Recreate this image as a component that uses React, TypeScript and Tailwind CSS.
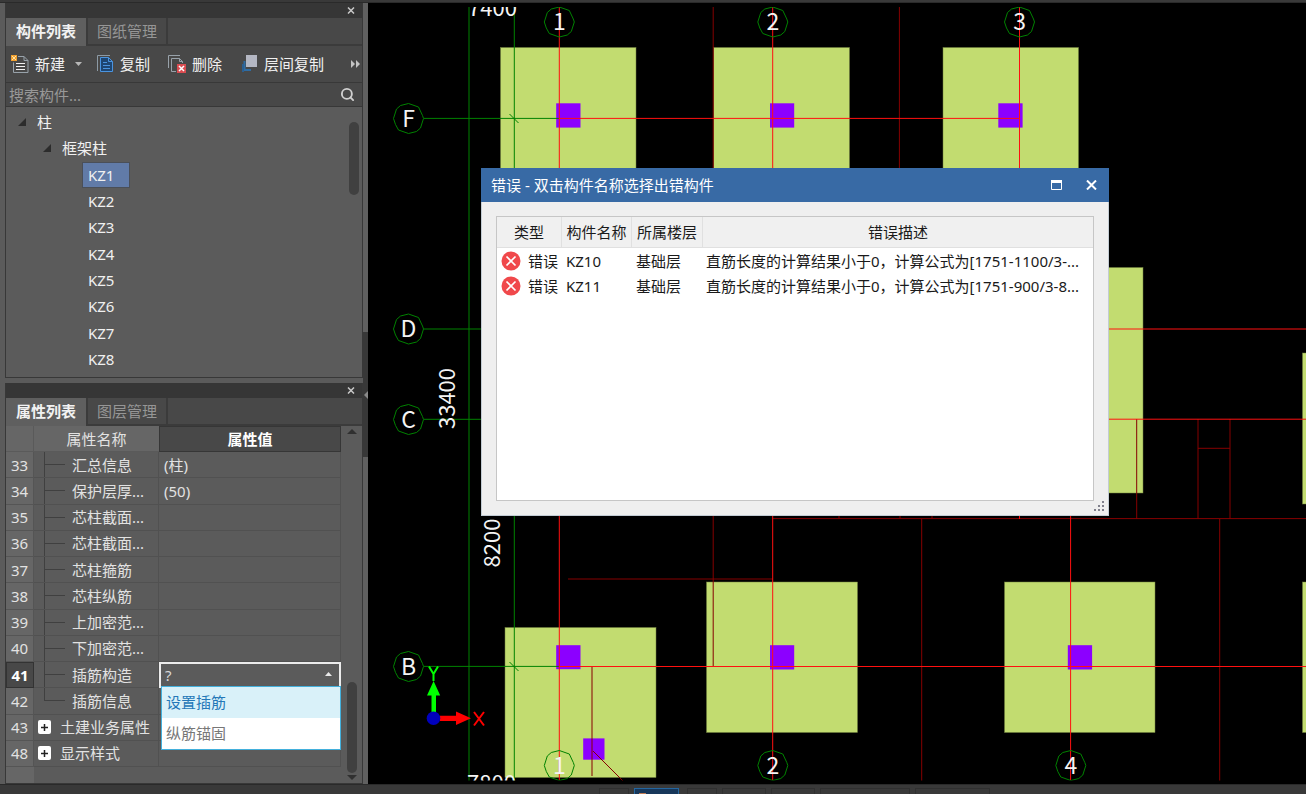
import { Search } from "lucide-react";
import type { ReactNode } from "react";

const members = ["KZ1", "KZ2", "KZ3", "KZ4", "KZ5", "KZ6", "KZ7", "KZ8"];

type PropertyRow = {
  no: number;
  name: string;
  value?: string;
  group?: boolean;
  last?: boolean;
  editing?: boolean;
};

const properties: PropertyRow[] = [
  { no: 33, name: "汇总信息", value: "(柱)" },
  { no: 34, name: "保护层厚...", value: "(50)" },
  { no: 35, name: "芯柱截面..." },
  { no: 36, name: "芯柱截面..." },
  { no: 37, name: "芯柱箍筋" },
  { no: 38, name: "芯柱纵筋" },
  { no: 39, name: "上加密范..." },
  { no: 40, name: "下加密范..." },
  { no: 41, name: "插筋构造", editing: true },
  { no: 42, name: "插筋信息", last: true },
  { no: 43, name: "土建业务属性", group: true },
  { no: 48, name: "显示样式", group: true },
];

const errors = [
  { member: "KZ10", floor: "基础层", text: "直筋长度的计算结果小于0，计算公式为[1751-1100/3-..." },
  { member: "KZ11", floor: "基础层", text: "直筋长度的计算结果小于0，计算公式为[1751-900/3-8..." },
];

function NewIcon() {
  return (
    <svg width="18" height="20" viewBox="0 0 18 20" fill="none">
      <path d="M7 2.5h6l4 4v12H2.500v-10" stroke="#98a2aa" />
      <path d="M13 2.500v4h4" stroke="#98a2aa" />
      <path d="M5 9.500h9M5 12.500h9M5 15.500h9" stroke="#f2f2f2" />
      <rect x="0" y="1" width="6" height="6" fill="#f0a030" />
      <path d="M1 2l4 4M5 2l-4 4" stroke="#ffe2a6" />
    </svg>
  );
}

function CopyIcon() {
  return (
    <svg width="17" height="18" viewBox="0 0 17 18" fill="none">
      <path d="M13 .5H.5V16" stroke="#8c9aa5" />
      <path d="M3.500 2.500h8l4 4v10h-12z" fill="#1e4672" stroke="#4a94e0" />
      <path d="M11.500 2.500v4h4M6 7.500h4M6 10.500h7M6 13.500h7" stroke="#4a94e0" />
    </svg>
  );
}

function DeleteIcon() {
  return (
    <svg width="18" height="18" viewBox="0 0 18 18" fill="none">
      <path d="M12 .5H.5V13" stroke="#98a2aa" />
      <path d="M8 16.500H3.500v-13h8l3 3V8M11.500 3.500v3h3" stroke="#98a2aa" />
      <rect x="9" y="9" width="9" height="9" fill="#d94b50" />
      <path d="M11 11l5 5M16 11l-5 5" stroke="#fff" strokeWidth="1.500" />
    </svg>
  );
}

function LayerCopyIcon() {
  return (
    <svg width="18" height="17" viewBox="-2 0 18 17" fill="none">
      <path d="M2.500 6v9H9" stroke="#2f6ca3" strokeWidth="2" />
      <rect x="0" y="9" width="2" height="8" fill="#2b5f90" />
      <rect x="4" y="0" width="11" height="12" fill="#b4b7c3" />
    </svg>
  );
}

function ToolButton({ icon, label, children }: { icon: ReactNode; label: string; children?: ReactNode }) {
  return (
    <button type="button" className="flex items-center gap-[6px] whitespace-nowrap text-[#f0f0f0]">
      {icon}
      {label}
      {children}
    </button>
  );
}

function PanelTitle({ label }: { label: string }) {
  return (
    <div className="flex h-[15px] shrink-0 items-center justify-end bg-[#363636] pr-[7px]">
      <button type="button" aria-label={label}>
        <svg width="8" height="7" viewBox="0 0 8 7">
          <path d="M1 0.500l6 6M7 0.500l-6 6" stroke="#c8c8c8" strokeWidth="1.500" />
        </svg>
      </button>
    </div>
  );
}

function Tabs({ active, other }: { active: string; other: string }) {
  return (
    <div role="tablist" className="flex h-[28px] shrink-0 bg-[#484848]">
      <button
        type="button"
        role="tab"
        aria-selected="true"
        className="w-[80px] bg-[#5f5f5f] pb-[2px] font-bold text-[#f2f2f2]"
      >
        {active}
      </button>
      <button
        type="button"
        role="tab"
        aria-selected="false"
        className="w-[82px] border-x-2 border-b-2 border-[#3b3b3b] text-[#969696]"
      >
        {other}
      </button>
      <div className="flex-1 border-b-2 border-[#3b3b3b]" />
    </div>
  );
}

function Caret() {
  return (
    <svg width="8" height="8" viewBox="0 0 8 8">
      <path d="M8 0v8H0z" fill="#2c2c2c" />
    </svg>
  );
}

function MemberPanel() {
  return (
    <section className="flex h-[375px] shrink-0 flex-col border border-t-0 border-[#383838] bg-[#5b5b5b]">
      <PanelTitle label="关闭构件列表" />
      <Tabs active="构件列表" other="图纸管理" />
      <div className="flex h-[36px] shrink-0 items-center bg-[#484848] pb-px pl-[5px]">
        <div className="flex flex-1 items-center gap-[18px]">
          <ToolButton icon={<NewIcon />} label="新建">
            <svg className="-mr-[3px] ml-[4px]" width="7" height="4" viewBox="0 0 7 4">
              <path d="M0 0h7l-3.500 4z" fill="#b8b8b8" />
            </svg>
          </ToolButton>
          <ToolButton icon={<CopyIcon />} label="复制" />
          <ToolButton icon={<DeleteIcon />} label="删除" />
          <ToolButton icon={<LayerCopyIcon />} label="层间复制" />
        </div>
        <button type="button" aria-label="更多">
          <svg width="12" height="8" viewBox="0 0 12 8" fill="#c4c4c4">
            <path d="M1 0l4 4-4 4zM6 0l4 4-4 4z" />
          </svg>
        </button>
      </div>
      <label className="flex h-[25px] shrink-0 items-center border-y border-[#383838] bg-[#484848] pr-[7px] pl-[3px]">
        <input
          type="text"
          aria-label="搜索构件"
          placeholder="搜索构件..."
          className="min-w-0 flex-1 bg-transparent outline-none placeholder:text-[#989898]"
        />
        <Search size={15} strokeWidth={3} className="text-[#d0d0d0]" />
      </label>
      <div className="flex min-h-0 flex-1 text-[#f0f0f0]">
        <ul className="flex flex-1 flex-col pt-[2px] pb-[5px]">
          <li className="flex flex-1 items-center gap-[11px] pl-[12px]">
            <Caret />
            柱
          </li>
          <li className="flex flex-1 items-center gap-[11px] pl-[37px]">
            <Caret />
            框架柱
          </li>
          {members.map((member, index) => (
            <li key={member} className="flex flex-1 pl-[76px]">
              <button
                type="button"
                className={
                  index === 0
                    ? "w-[48px] border border-[#4a4f58] bg-[#617ba8] pl-[5px] text-left"
                    : "w-[48px] border border-transparent pl-[5px] text-left"
                }
              >
                {member}
              </button>
            </li>
          ))}
        </ul>
        <div className="mt-[15px] mr-[3px] h-[73px] w-[10px] rounded-full bg-[#404040]" />
      </div>
    </section>
  );
}

function NameCell({ row }: { row: PropertyRow }) {
  if (row.group) {
    return (
      <div className="flex h-full items-center gap-[9px] pl-[4px]">
        <button
          type="button"
          aria-label={"展开" + row.name}
          className="flex h-[14px] w-[13px] items-center justify-center rounded-[2px] bg-white"
        >
          <svg width="7" height="7" viewBox="0 0 7 7">
            <path d="M3.500 0v7M0 3.500h7" stroke="#222" strokeWidth="1.500" />
          </svg>
        </button>
        {row.name}
      </div>
    );
  }
  return (
    <div className="flex h-full items-center gap-[7px] pl-[10px]">
      <div className="flex h-full w-[21px] flex-col">
        <div className="flex-1 border-b border-l border-[#404040]" />
        <div className={row.last ? "flex-1" : "flex-1 border-l border-[#404040]"} />
      </div>
      {row.name}
    </div>
  );
}

function StructureSelect() {
  return (
    <div className="relative h-full">
      <select
        aria-label="插筋构造"
        className="block h-full w-full appearance-none border-2 border-[#ececec] bg-[#5b5b5b] pl-[4px] text-[#d8d8d8] outline-none"
      >
        <option>?</option>
        <option>设置插筋</option>
        <option>纵筋锚固</option>
      </select>
      <svg className="pointer-events-none absolute top-[10px] right-[9px]" width="7" height="4" viewBox="0 0 7 4">
        <path d="M0 4h7l-3.500-4z" fill="#e8e8e8" />
      </svg>
      <ul className="absolute top-[24px] right-0 left-[2px] z-10 border border-[#43b0dc] bg-white leading-[31px]">
        <li className="bg-[#d9f1f9]">
          <button type="button" className="block w-full pl-[4px] text-left text-[#2478b8]">
            设置插筋
          </button>
        </li>
        <li>
          <button type="button" className="block w-full pl-[4px] text-left text-[#777777]">
            纵筋锚固
          </button>
        </li>
      </ul>
    </div>
  );
}

function PropertyPanel() {
  return (
    <section className="flex min-h-0 flex-1 flex-col border border-t-0 border-[#383838] bg-[#5b5b5b]">
      <PanelTitle label="关闭属性列表" />
      <Tabs active="属性列表" other="图层管理" />
      <div className="flex min-h-0 flex-1">
        <div className="flex w-[335px] flex-col">
          <table className="h-[341px] w-full table-fixed border-separate border-spacing-0 text-[#e2e2e2]">
            <colgroup>
              <col className="w-[28px]" />
              <col className="w-[125px]" />
              <col />
            </colgroup>
            <thead>
              <tr className="h-[26px]">
                <th className="border-r border-b border-[#5a5a5a] bg-[#666666] p-0" />
                <th className="border-b border-[#5a5a5a] bg-[#666666] p-0 font-normal">属性名称</th>
                <th className="border border-[#363636] bg-[#484848] p-0 font-bold text-white">属性值</th>
              </tr>
            </thead>
            <tbody>
              {properties.map((row) => (
                <tr key={row.no} className="h-[26px]">
                  <td
                    className={
                      row.editing
                        ? "border border-[#333333] bg-[#484848] p-0 text-center font-bold text-white"
                        : "border-r border-b border-[#555555] bg-[#666666] p-0 text-center"
                    }
                  >
                    {row.no}
                  </td>
                  <td className="h-[26px] border-r border-b border-[#515151] p-0 whitespace-nowrap">
                    <NameCell row={row} />
                  </td>
                  <td className={row.editing ? "h-[26px] p-0" : "border-r border-b border-[#515151] p-0 pl-[5px]"}>
                    {row.editing ? <StructureSelect /> : row.value}
                  </td>
                </tr>
              ))}
            </tbody>
          </table>
          <div className="w-[28px] flex-1 bg-[#666666]" />
        </div>
        <div className="flex flex-1 flex-col items-center justify-between pt-[3px] pb-[3px]">
          <svg width="10" height="5" viewBox="0 0 10 5">
            <path d="M0 5h10l-5-5z" fill="#303030" />
          </svg>
          <div className="flex flex-col items-center gap-[2px]">
            <div className="h-[91px] w-[10px] rounded-full bg-[#404040]" />
            <svg width="10" height="5" viewBox="0 0 10 5">
              <path d="M0 0h10l-5 5z" fill="#303030" />
            </svg>
          </div>
        </div>
      </div>
    </section>
  );
}

function Splitter() {
  return (
    <div className="flex w-[5px] shrink-0 flex-col bg-[#606060]">
      <div className="h-[329px]" />
      <button type="button" aria-label="收起面板" className="flex h-[125px] items-center justify-end bg-[#383838]">
        <svg width="4" height="8" viewBox="0 0 4 8">
          <path d="M4 0v8L0 4z" fill="#8a8a8a" />
        </svg>
      </button>
    </div>
  );
}

// [x, y, width, height] in drawing units
const slabs = [
  [500.500, 47.500, 135.500, 160],
  [713.500, 47.500, 136, 160],
  [943, 47.500, 135.500, 160],
  [1000, 267.500, 143, 225.500],
  [1302.500, 353, 150, 151],
  [505, 627.500, 151, 150],
  [706.500, 582, 151, 150.500],
  [1004.500, 582, 150.500, 150.500],
  [1302.500, 582, 150, 150.500],
];

const columns = [
  [556.200, 103.300, 24.300, 24.300],
  [770, 103.300, 24.200, 24.300],
  [998.300, 103.300, 24.300, 24.300],
  [556.200, 645.200, 24.300, 24],
  [770, 645.200, 24.200, 24.300],
  [1067.800, 645.200, 24.300, 24.300],
  [583.200, 738.400, 21.300, 21.300],
];

const bubbles = [
  { x: 559.3, y: 22, label: "1" },
  { x: 772.8, y: 22, label: "2" },
  { x: 1019.5, y: 22, label: "3" },
  { x: 559.3, y: 765.5, label: "1" },
  { x: 772.8, y: 765.5, label: "2" },
  { x: 1070.8, y: 765.5, label: "4" },
  { x: 408.5, y: 118.5, label: "F" },
  { x: 408.5, y: 329, label: "D" },
  { x: 408.5, y: 419.5, label: "C" },
  { x: 408.5, y: 666.5, label: "B" },
];

function Drawing() {
  return (
    <svg
      role="img"
      aria-label="基础平面图"
      className="block h-full w-full font-['Noto_Sans_CJK_SC',sans-serif]"
      viewBox="368 3 938 781"
      preserveAspectRatio="xMinYMin slice"
    >
      <clipPath id="view">
        <rect x="368" y="7" width="1400" height="773.500" />
      </clipPath>
      <g clipPath="url(#view)" fill="none">
        {slabs.map(([x, y, w, h]) => (
          <rect key={x + "-" + y} x={x} y={y} width={w} height={h} fill="#c2dc70" stroke="#6f7f3c" strokeWidth="0.500" />
        ))}
        {columns.map(([x, y, w, h]) => (
          <rect key={x + "-" + y} x={x} y={y} width={w} height={h} fill="#8c00ff" />
        ))}
        {/* walls */}
        <path
          stroke="#860000"
          strokeWidth="1"
          d="M713.200 7V168M713.200 516V666M899.400 7V168M568 579H772.800M772.800 518.600H1306M921.700 519V781M1219.700 519V781M1136.700 419V519M1198 419V519M1230 419V519M1198 448.300H1230M839 516V519M900 516V519M932 516V519M592 666V776M593 751L623 781"
        />
        {/* dimension lines */}
        <path
          stroke="#008200"
          d="M469 7V781M514.300 7V781M424 118.400H559M424 329H482M424 419.300H482M424 666.400H559M509.500 114L518.500 123M509.500 662L518.500 671"
        />
        {/* axes */}
        <path
          stroke="#ff1010"
          strokeWidth="1"
          d="M559.300 7V780M772.700 7V168M772.700 516V780M1019.500 7V168M1019.500 516V519M1070.600 516V780M559 118.400H1019.500M1100 329H1306M1100 419.200H1306M559 666.500H1306"
        />
        {bubbles.map(({ x, y, label }) => (
          <g key={label + x + "-" + y} transform={`translate(${x} ${y})`}>
            <path
              d="M0-15L10-11.500L14-3L15 0L12 9.500L8 13L0 15L-10 11.500L-13 6L-15 0L-12-9.500L-8-13z"
              stroke="#008200"
            />
            <text y="8" textAnchor="middle" fontSize="23" fill="#f4f4f4">
              {label}
            </text>
          </g>
        ))}
        <g fill="#f4f4f4" fontSize="22">
          <text x="468" y="16">7400</text>
          <text x="467" y="791">7800</text>
          <text transform="translate(455 398.500) rotate(-90)" textAnchor="middle">33400</text>
          <text transform="translate(500 543) rotate(-90)" textAnchor="middle">8200</text>
        </g>
        {/* UCS marker */}
        <path d="M431.500 712V695.500H427L433.600 681L440.200 695.500H436V712z" fill="#00ff00" />
        <path d="M440 715.700H456V711.500L471 718.200L456 725V721H440z" fill="#ff0000" />
        <circle cx="433.500" cy="718.200" r="6.800" fill="#0000bd" />
        <path d="M429 666.500L433.500 674L438 666.500M433.500 674V681" stroke="#00ff00" strokeWidth="2" />
        <path d="M474 712L484 725.500M484 712L474 725.500" stroke="#ff0000" strokeWidth="2" />
      </g>
    </svg>
  );
}

function ErrorDialog() {
  return (
    <div
      role="dialog"
      aria-labelledby="error-title"
      className="absolute top-[165px] left-[113px] flex h-[348px] w-[628px] flex-col bg-[#efefef] text-[#1a1a1a]"
    >
      <div className="flex h-[34px] shrink-0 items-center bg-[#386aa5] pr-[12px] pl-[10px] text-white">
        <h2 id="error-title" className="flex-1">
          错误 - 双击构件名称选择出错构件
        </h2>
        <div className="flex items-center gap-[24px]">
          <button type="button" aria-label="最大化">
            <svg width="11" height="10" viewBox="0 0 11 10">
              <path d="M.5 1v8.500h10V1" fill="none" stroke="#fff" />
              <rect width="11" height="3" fill="#fff" />
            </svg>
          </button>
          <button type="button" aria-label="关闭">
            <svg width="11" height="10" viewBox="0 0 11 10">
              <path d="M1 .5l9 9M10 .5l-9 9" stroke="#fff" strokeWidth="2" />
            </svg>
          </button>
        </div>
      </div>
      <div className="relative flex-1 border border-t-0 border-[#c3ccd4] px-[14px] pt-[14px] pb-[14px]">
        <div className="h-full border border-[#c6c6c6] bg-white">
          <table className="w-full table-fixed border-separate border-spacing-0 whitespace-nowrap">
            <colgroup>
              <col className="w-[65px]" />
              <col className="w-[70px]" />
              <col className="w-[71px]" />
              <col />
            </colgroup>
            <thead>
              <tr className="h-[31px] bg-[#f0f0f0]">
                <th className="border-r border-b border-[#e0e0e0] p-0 font-normal">类型</th>
                <th className="border-r border-b border-[#e0e0e0] p-0 font-normal">构件名称</th>
                <th className="border-r border-b border-[#e0e0e0] p-0 font-normal">所属楼层</th>
                <th className="border-b border-[#e0e0e0] p-0 font-normal">错误描述</th>
              </tr>
            </thead>
            <tbody>
              {errors.map((error) => (
                <tr key={error.member} className="h-[25px]">
                  <td className="p-0">
                    <div className="flex items-center gap-[7px] pl-[4px]">
                      <svg className="shrink-0" width="20" height="20" viewBox="0 0 20 20">
                        <circle cx="10" cy="10" r="9.500" fill="#f0484b" />
                        <path d="M5.500 5.500l9 9M14.500 5.500l-9 9" stroke="#fff" strokeWidth="1.700" />
                      </svg>
                      错误
                    </div>
                  </td>
                  <td className="p-0 pl-[4px]">{error.member}</td>
                  <td className="p-0 pl-[4px]">{error.floor}</td>
                  <td className="p-0 pl-[3px]">{error.text}</td>
                </tr>
              ))}
            </tbody>
          </table>
        </div>
        <svg className="absolute right-[3px] bottom-[3px]" width="11" height="11" viewBox="0 0 11 11" fill="#80808c">
          <path d="M8 0h2v2h-2zM4 4h2v2h-2zM8 4h2v2h-2zM0 8h2v2h-2zM4 8h2v2h-2zM8 8h2v2h-2z" />
        </svg>
      </div>
    </div>
  );
}

function StatusBar() {
  return (
    <footer className="flex h-[10px] shrink-0 gap-[5px] overflow-hidden border-t border-[#2a2a2a] bg-[#393939] pt-[3px] pl-[599px]">
      <div className="h-[20px] w-[30px] border border-[#303030]" />
      <div className="h-[20px] w-[45px] border border-[#24669f] bg-[#17375a] pt-[4px] pl-[4px]">
        <div className="h-[8px] w-[7px] bg-[#c07a52]" />
      </div>
      <div className="ml-[3px] h-[20px] w-[30px] border border-[#303030]" />
      <div className="h-[20px] w-[44px] border border-[#303030]" />
      <div className="h-[20px] w-[44px] border border-[#303030]" />
      <div className="h-[20px] w-[90px] border border-[#303030]" />
      <div className="h-[20px] w-[75px] border border-[#303030]" />
    </footer>
  );
}

export default function App() {
  return (
    <div className="flex h-screen flex-col overflow-hidden bg-[#393939] font-['Noto_Sans','Noto_Sans_CJK_SC',sans-serif] text-[15px] leading-[20px]">
      <div className="h-[3px] shrink-0 border-b border-[#2a2a2a] bg-[#393939]" />
      <main className="flex min-h-0 flex-1">
        <aside className="flex w-[368px] shrink-0 bg-[#5b5b5b] pl-[5px]">
          <div className="flex min-w-0 flex-1 flex-col gap-[5px]">
            <MemberPanel />
            <PropertyPanel />
          </div>
          <Splitter />
        </aside>
        <div className="relative min-w-0 flex-1 overflow-hidden bg-black">
          <Drawing />
          <ErrorDialog />
        </div>
      </main>
      <StatusBar />
    </div>
  );
}
